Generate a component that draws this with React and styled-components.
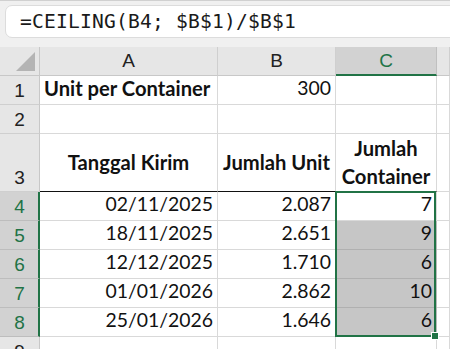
import React from 'react'
import styled, { createGlobalStyle } from 'styled-components'

const GREEN = '#217346'
const GRID = '#d9d9d9'

const GlobalStyle = createGlobalStyle`
  html, body {
    margin: 0;
    padding: 0;
    background: #ffffff;
    overflow: hidden;
  }
  body {
    font-family: Lato, "Liberation Sans", sans-serif;
  }
`

const Window = styled.div`
  width: 450px;
  height: 349px;
  overflow: hidden;
  background: #f0f0f0;
  border-top: 1px solid #d0d0d0;
  box-sizing: border-box;
`

const FormulaStrip = styled.div`
  height: 46px;
  padding: 4px 0 0 5px;
  box-sizing: border-box;
  overflow: hidden;
`

const FormulaBox = styled.div`
  height: 33px;
  margin-right: -20px;
  background: #ffffff;
  border: 1px solid #dcdcdc;
  border-radius: 7px;
  display: flex;
  align-items: center;
  padding-left: 14px;
  box-sizing: border-box;
  font-family: "DejaVu Sans Mono", "Liberation Mono", monospace;
  font-size: 19.6px;
  letter-spacing: 0.2px;
  color: #1a1a1a;
`

const Sheet = styled.div`
  display: grid;
  grid-template-columns: 40px 178px 118px 101px 1fr;
  grid-template-rows: 29px 29px 29px 58px repeat(6, 29px);
  background: #ffffff;
`

const Corner = styled.div`
  background: #e6e6e6;
  border-right: 1px solid #c8c8c8;
  border-bottom: 1px solid #c8c8c8;
  position: relative;
  &::after {
    content: '';
    position: absolute;
    right: 4px;
    bottom: 4px;
    width: 0;
    height: 0;
    border-style: solid;
    border-width: 0 0 19px 19px;
    border-color: transparent transparent #b4b4b4 transparent;
  }
`

const ColHead = styled.div`
  background: ${p => (p.$active ? '#d2d2d2' : '#e6e6e6')};
  color: ${p => (p.$active ? GREEN : '#222')};
  border-right: 1px solid ${p => (p.$active ? '#c0c0c0' : '#cfcfcf')};
  border-bottom: ${p => (p.$active ? `2px solid ${GREEN}` : '1px solid #c8c8c8')};
  display: flex;
  align-items: center;
  justify-content: center;
  font-family: "Liberation Sans", Arial, sans-serif;
  font-size: 19px;
  padding-bottom: ${p => (p.$active ? '0' : '1px')};
  box-sizing: border-box;
`

const RowHead = styled.div`
  background: ${p => (p.$active ? '#d2d2d2' : '#e6e6e6')};
  color: ${p => (p.$active ? GREEN : '#222')};
  border-right: ${p => (p.$active ? `2px solid ${GREEN}` : '1px solid #c8c8c8')};
  border-bottom: 1px solid ${p => (p.$active ? '#bdbdbd' : '#cfcfcf')};
  display: flex;
  align-items: flex-end;
  justify-content: center;
  padding-bottom: 2px;
  padding-left: ${p => (p.$active ? '1px' : '0')};
  box-sizing: border-box;
  font-family: "Liberation Sans", Arial, sans-serif;
  font-size: 19px;
`

const Cell = styled.div`
  position: relative;
  background: ${p => (p.$shade ? '#c6c6c6' : '#ffffff')};
  border-right: 1px solid ${p => (p.$shade ? '#b8b8b8' : GRID)};
  border-bottom: ${p =>
    p.$rule ? '1px solid #111' : `1px solid ${p.$shade ? '#b0b0b0' : GRID}`};
  display: flex;
  flex-direction: column;
  justify-content: ${p => (p.$middle ? 'center' : 'flex-end')};
  align-items: ${p =>
    p.$align === 'right' ? 'flex-end' : p.$align === 'center' ? 'center' : 'flex-start'};
  text-align: ${p => p.$align || 'left'};
  padding: 0 4px 2px 4px;
  box-sizing: border-box;
  font-size: ${p => (p.$bold ? '20.2px' : '19.4px')};
  line-height: 28px;
  font-weight: ${p => (p.$bold ? 700 : 400)};
  color: #111;
  white-space: nowrap;
`

/* green outline of the selected range, anchored on the active cell */
const Selection = styled.div`
  position: absolute;
  left: -1px;
  top: -1px;
  width: 101px;
  height: ${p => p.$rows * 29 + 1}px;
  border: 2px solid ${GREEN};
  box-sizing: border-box;
  pointer-events: none;
  z-index: 2;
`

const FillHandle = styled.span`
  position: absolute;
  right: -5px;
  bottom: -5px;
  width: 6px;
  height: 6px;
  background: ${GREEN};
  border: 1px solid #ffffff;
`

const Value = styled.span`
  position: relative;
  z-index: 3;
`

const rows = [
  ['02/11/2025', '2.087', '7'],
  ['18/11/2025', '2.651', '9'],
  ['12/12/2025', '1.710', '6'],
  ['01/01/2026', '2.862', '10'],
  ['25/01/2026', '1.646', '6'],
]

export default function App() {
  return (
    <Window>
      <GlobalStyle />
      <FormulaStrip>
        <FormulaBox>=CEILING(B4; $B$1)/$B$1</FormulaBox>
      </FormulaStrip>
      <Sheet>
        <Corner />
        <ColHead>A</ColHead>
        <ColHead>B</ColHead>
        <ColHead $active>C</ColHead>
        <ColHead />

        <RowHead>1</RowHead>
        <Cell $bold>Unit per Container</Cell>
        <Cell $align="right">300</Cell>
        <Cell />
        <Cell />

        <RowHead>2</RowHead>
        <Cell />
        <Cell />
        <Cell />
        <Cell />

        <RowHead>3</RowHead>
        <Cell $bold $middle $align="center" $rule>Tanggal Kirim</Cell>
        <Cell $bold $middle $align="center" $rule>Jumlah Unit</Cell>
        <Cell $bold $middle $align="center" $rule>
          <span>Jumlah</span>
          <span>Container</span>
        </Cell>
        <Cell />

        {rows.map(([date, units, count], i) => (
          <React.Fragment key={date}>
            <RowHead $active>{i + 4}</RowHead>
            <Cell $align="right">{date}</Cell>
            <Cell $align="right">{units}</Cell>
            <Cell $align="right" $shade={i > 0}>
              {i === 0 && (
                <Selection $rows={rows.length}>
                  <FillHandle />
                </Selection>
              )}
              <Value>{count}</Value>
            </Cell>
            <Cell />
          </React.Fragment>
        ))}

        <RowHead>9</RowHead>
        <Cell />
        <Cell />
        <Cell />
        <Cell />
      </Sheet>
    </Window>
  )
}
